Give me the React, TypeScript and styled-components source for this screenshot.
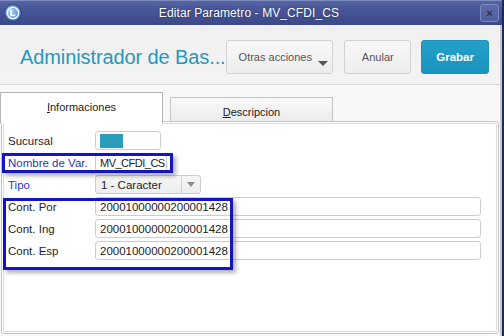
import React from "react";
import styled, { createGlobalStyle } from "styled-components";

const GlobalStyle = createGlobalStyle`
  html, body { margin: 0; padding: 0; }
  body {
    background: #1c2a55;
    font-family: "Liberation Sans", Arial, sans-serif;
    width: 504px;
    height: 336px;
    overflow: hidden;
  }
`;

const Window = styled.div`
  position: relative;
  width: 502px;
  height: 336px;
  display: flex;
  flex-direction: column;
`;

const TitleBar = styled.div`
  height: 25px;
  flex: none;
  display: flex;
  align-items: center;
  padding: 0 3px 0 4px;
  background: linear-gradient(#56659f, #46559a 40%, #3b4986);
  border-top: 1px solid #7f8cbf;
  box-sizing: border-box;
`;

const TitleText = styled.div`
  flex: 1;
  text-align: center;
  color: #ffffff;
  font-size: 12px;
  letter-spacing: 0.1px;
  text-shadow: 0 0 2px rgba(0, 0, 0, 0.55);
  padding-right: 4px;
`;

const CloseButton = styled.div`
  width: 17px;
  height: 16px;
  border: 1px solid #7d8bc2;
  border-radius: 3px;
  background: linear-gradient(#5d6ca9, #4e5d9d);
  display: flex;
  align-items: center;
  justify-content: center;
  color: #2b2f48;
  font-size: 11px;
  font-weight: bold;
  line-height: 1;
`;

const Body = styled.div`
  flex: 1;
  display: flex;
  flex-direction: column;
  background: #f8f8f8;
  border-right: 2px solid #c6c8cc;
`;

const Header = styled.div`
  height: 60px;
  flex: none;
  display: flex;
  align-items: center;
  padding: 5px 11px 0 20px;
  box-sizing: border-box;
  background: linear-gradient(#f0f0f0, #f3f3f3);
  border-bottom: 1px solid #d6d6d6;
`;

const AppTitle = styled.div`
  flex: 1;
  color: #2598bf;
  font-size: 20px;
  letter-spacing: -0.1px;
  white-space: nowrap;
`;

const Button = styled.div<{ $primary?: boolean; $w: number }>`
  position: relative;
  width: ${(p) => p.$w}px;
  height: 34px;
  box-sizing: border-box;
  margin-left: 10px;
  border-radius: 3px;
  display: flex;
  align-items: center;
  justify-content: center;
  font-size: ${(p) => (p.$primary ? "11.5px" : "11px")};
  font-weight: ${(p) => (p.$primary ? "bold" : "normal")};
  color: ${(p) => (p.$primary ? "#ffffff" : "#555555")};
  background: ${(p) =>
    p.$primary ? "linear-gradient(#23a0cb, #1a93be)" : "linear-gradient(#f8f8f8, #ededed)"};
  border: 1px solid ${(p) => (p.$primary ? "#1a8fba" : "#d2d2d2")};
`;

const MenuButton = styled(Button)`
  justify-content: flex-start;
  padding-left: 12px;
  margin-left: 0;
  margin-right: 1px;
`;

const Caret = styled.span`
  position: absolute;
  right: 4px;
  bottom: 7px;
  width: 0;
  height: 0;
  border-left: 5px solid transparent;
  border-right: 5px solid transparent;
  border-top: 5px solid #555;
`;

const TabStrip = styled.div`
  height: 37px;
  flex: none;
  display: flex;
  align-items: flex-end;
  gap: 7px;
  position: relative;
  z-index: 1;
  margin-bottom: -1px;
`;

const Tab = styled.div<{ $active?: boolean }>`
  width: 163px;
  height: ${(p) => (p.$active ? "32px" : "25px")};
  box-sizing: border-box;
  display: flex;
  align-items: center;
  justify-content: center;
  font-size: 11px;
  color: #222;
  padding-bottom: ${(p) => (p.$active ? "2px" : "0")};
  padding-top: ${(p) => (p.$active ? "0" : "4px")};
  background: ${(p) => (p.$active ? "#ffffff" : "linear-gradient(#f9f9f9, #ececec)")};
  border: 1px solid ${(p) => (p.$active ? "#b5b5b5" : "#c6c6c6")};
  border-bottom: ${(p) => (p.$active ? "1px solid #ffffff" : "1px solid #c6c6c6")};
  margin-bottom: ${(p) => (p.$active ? "-2px" : "0")};
  position: relative;
  z-index: ${(p) => (p.$active ? 2 : 0)};
`;

const Mnemonic = styled.span`
  text-decoration: underline;
`;

const Panel = styled.div`
  flex: 1;
  margin: 0 1px 2px 1px;
  border: 1px solid #c4c4c4;
  border-radius: 3px;
  padding: 1px;
  display: flex;
  background: #ffffff;
`;

const PanelInner = styled.div`
  flex: 1;
  border: 1px solid #dcdcdc;
  border-radius: 2px;
  background: #ffffff;
  padding: 7px 15px 0 4px;
`;

const Form = styled.div`
  display: grid;
  grid-template-columns: 87px 1fr;
  grid-auto-rows: 19px;
  row-gap: 3px;
  align-items: center;
`;

const Label = styled.div<{ $blue?: boolean }>`
  font-size: 11.5px;
  color: ${(p) => (p.$blue ? "#2a36b4" : "#1e1e1e")};
  white-space: nowrap;
`;

const Field = styled.div<{ $w?: number; $tight?: boolean }>`
  width: ${(p) => (p.$w ? `${p.$w}px` : "auto")};
  height: 19px;
  box-sizing: border-box;
  border: 1px solid #cdcdcd;
  border-radius: 3px;
  background: #ffffff;
  display: flex;
  align-items: center;
  padding-left: 4px;
  font-size: ${(p) => (p.$tight ? "11px" : "11.5px")};
  letter-spacing: ${(p) => (p.$tight ? "-0.5px" : "0")};
  color: #222;
  overflow: hidden;
  white-space: nowrap;
`;

const ColorSwatch = styled.div`
  width: 23px;
  height: 14px;
  margin-top: 1px;
  background: #2b9cbb;
`;

const Select = styled(Field)`
  padding-left: 0;
  background: linear-gradient(#f6f6f6, #eeeeee);
`;

const SelectValue = styled.div`
  flex: 1;
  padding-left: 5px;
`;

const SelectArrow = styled.div`
  width: 18px;
  height: 100%;
  border-left: 1px solid #d0d0d0;
  display: flex;
  align-items: center;
  justify-content: center;
  &::after {
    content: "";
    border-left: 4px solid transparent;
    border-right: 4px solid transparent;
    border-top: 5px solid #8a8a8a;
  }
`;

const Highlight = styled.div<{ $x: number; $y: number; $w: number; $h: number }>`
  position: absolute;
  left: ${(p) => p.$x}px;
  top: ${(p) => p.$y}px;
  width: ${(p) => p.$w}px;
  height: ${(p) => p.$h}px;
  box-sizing: border-box;
  border: 3px solid #1414c2;
  box-shadow: 3px 3px 4px rgba(0, 0, 0, 0.3);
  pointer-events: none;
  z-index: 5;
`;

const AppIcon = () => (
  <svg width="18" height="18" viewBox="0 0 18 18">
    <defs>
      <radialGradient id="ig" cx="40%" cy="35%" r="70%">
        <stop offset="0" stopColor="#a9d2ff" />
        <stop offset="1" stopColor="#3a6fc0" />
      </radialGradient>
    </defs>
    <circle cx="9" cy="9" r="8.3" fill="url(#ig)" stroke="#203a7a" strokeWidth="0.8" />
    <circle cx="9" cy="9" r="5.6" fill="none" stroke="#ffffff" strokeWidth="1.4" />
    <path d="M7 5.8 V11.4 H11.4" fill="none" stroke="#ffffff" strokeWidth="1.6" />
  </svg>
);

const value = "20001000000200001428";

export default function App() {
  return (
    <>
      <GlobalStyle />
      <Window>
        <TitleBar>
          <AppIcon />
          <TitleText>Editar Parametro - MV_CFDI_CS</TitleText>
          <CloseButton>×</CloseButton>
        </TitleBar>
        <Body>
          <Header>
            <AppTitle>Administrador de Bas...</AppTitle>
            <MenuButton $w={108}>
              Otras acciones
              <Caret />
            </MenuButton>
            <Button $w={67}>Anular</Button>
            <Button $w={68} $primary>
              Grabar
            </Button>
          </Header>
          <TabStrip>
            <Tab $active>
              <span>
                <Mnemonic>I</Mnemonic>nformaciones
              </span>
            </Tab>
            <Tab>
              <span>
                <Mnemonic>D</Mnemonic>escripcion
              </span>
            </Tab>
          </TabStrip>
          <Panel>
            <PanelInner>
              <Form>
                <Label>Sucursal</Label>
                <Field $w={66}>
                  <ColorSwatch />
                </Field>
                <Label $blue>Nombre de Var.</Label>
                <Field $w={72} $tight>
                  MV_CFDI_CS
                </Field>
                <Label $blue>Tipo</Label>
                <Select $w={106}>
                  <SelectValue>1 - Caracter</SelectValue>
                  <SelectArrow />
                </Select>
                <Label>Cont. Por</Label>
                <Field>{value}</Field>
                <Label>Cont. Ing</Label>
                <Field>{value}</Field>
                <Label>Cont. Esp</Label>
                <Field>{value}</Field>
              </Form>
            </PanelInner>
          </Panel>
        </Body>
        <Highlight $x={2} $y={153} $w={171} $h={20} />
        <Highlight $x={3} $y={198} $w={230} $h={72} />
      </Window>
    </>
  );
}
